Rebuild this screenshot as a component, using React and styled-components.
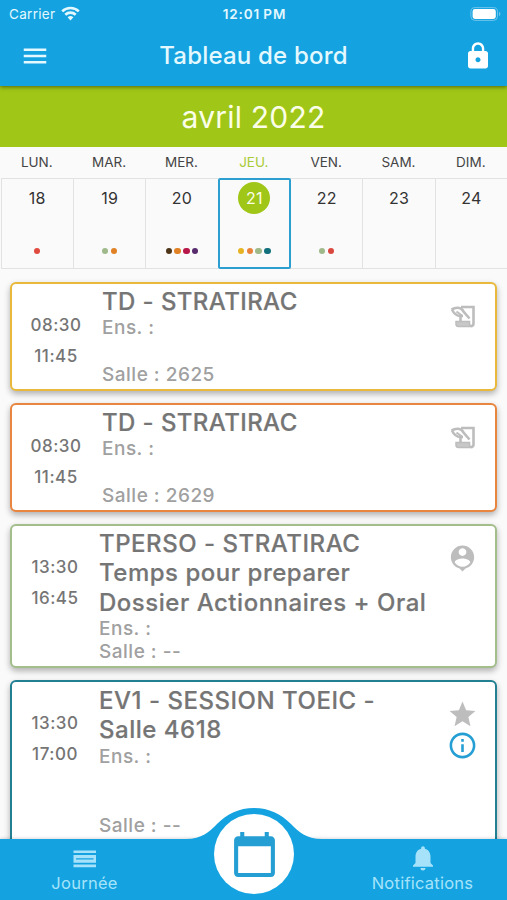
import React from 'react'
import styled, { createGlobalStyle } from 'styled-components'
import {
  MdMenu,
  MdLock,
  MdStar,
  MdInfoOutline,
  MdPersonPin,
  MdCalendarToday,
  MdNotifications,
} from 'react-icons/md'

const BLUE = '#14a3e0'
const GREEN = '#a0c617'

const GlobalStyle = createGlobalStyle`
  * {
    box-sizing: border-box;
  }
  body {
    margin: 0;
    background: #fafafa;
    font-family: Inter, "Liberation Sans", sans-serif;
  }
  svg {
    display: block;
  }
`

const Screen = styled.div`
  display: flex;
  flex-direction: column;
  width: 507px;
  height: 900px;
  overflow: hidden;
  background: #fafafa;
`

const Header = styled.header`
  flex: none;
  height: 86px;
  background: ${BLUE};
  color: #fff;
  box-shadow: 0 1px 4px rgba(0, 0, 0, 0.5);
  z-index: 1;
`

const StatusBar = styled.div`
  display: grid;
  grid-template-columns: 1fr auto 1fr;
  align-items: center;
  height: 27px;
  padding: 0 6px 0 9px;
  color: #e4f8ff;
  font-size: 13.5px;
`

const Carrier = styled.div`
  display: flex;
  align-items: center;
  gap: 6px;
  letter-spacing: 0.3px;
`

const Clock = styled.div`
  margin-left: -1px;
  font-weight: 600;
  letter-spacing: 0.85px;
  word-spacing: -1px;
`

const BatteryIcon = styled.svg`
  justify-self: end;
`

const AppBar = styled.div`
  display: grid;
  grid-template-columns: 30px 1fr 30px;
  align-items: center;
  height: 58px;
  padding: 0 14px 0 20px;
`

const Title = styled.h1`
  margin: -1px 6px 0 0;
  font-size: 24px;
  font-weight: 500;
  letter-spacing: 0.2px;
  text-align: center;
  color: #e4f8ff;
`

const Month = styled.div`
  flex: none;
  height: 61px;
  line-height: 62px;
  background: ${GREEN};
  color: #fbffe8;
  font-size: 30px;
  letter-spacing: 0.2px;
  text-align: center;
`

const Week = styled.div`
  flex: none;
  display: grid;
  grid-template-columns: repeat(7, 72.35px);
  padding-left: 0.6px;
`

const DayName = styled.div`
  height: 31px;
  line-height: 31px;
  font-size: 13.5px;
  text-align: center;
  color: ${(p) => (p.$selected ? '#a9cb36' : '#444')};
`

const Day = styled.div`
  display: flex;
  flex-direction: column;
  align-items: center;
  justify-content: space-between;
  height: 91px;
  padding: ${(p) => (p.$selected ? '2px 0 13px' : '3px 0 14px')};
  border: solid #e2e2e2;
  border-width: 1px 0 1px 1px;
  ${(p) => p.$selected && 'z-index: 1; margin-right: -1px; border: 2px solid #2c9fd0; border-radius: 2px;'}
`

const DayNumber = styled.div`
  width: 32px;
  height: 32px;
  line-height: 32px;
  border-radius: 50%;
  font-size: 16px;
  letter-spacing: 0.2px;
  text-align: center;
  color: ${(p) => (p.$selected ? '#fbffe8' : '#333')};
  background: ${(p) => (p.$selected ? GREEN : 'transparent')};
`

const Dots = styled.div`
  display: flex;
  gap: 2.4px;
`

const Dot = styled.span`
  width: 6.4px;
  height: 6.4px;
  border-radius: 50%;
  background: ${(p) => p.$color};
`

const Agenda = styled.main`
  flex: 1;
  min-height: 0;
  display: flex;
  flex-direction: column;
  gap: 12px;
  padding: 13px 10px 0;
  overflow: hidden;
`

const Card = styled.article`
  flex: none;
  display: grid;
  grid-template-columns: ${(p) => (p.$wide ? '90px' : '87px')} 1fr 65px;
  height: ${(p) => p.$height}px;
  border: 2px solid ${(p) => p.$color};
  border-radius: 6px;
  background: #fff;
  box-shadow: 0 3px 6px rgba(0, 0, 0, 0.3);
`

const Times = styled.div`
  padding: 26px ${(p) => (p.$wide ? '2px' : '1px')} 0 0;
  text-align: center;
  font-size: 17px;
  font-weight: 500;
  line-height: 30.6px;
  letter-spacing: 0.5px;
  color: #757575;
`

const Details = styled.div`
  padding-top: ${(p) => (p.$low ? '4px' : '3px')};
  white-space: pre-line;
`

const Course = styled.h2`
  margin: 0;
  font-size: 24px;
  font-weight: 500;
  line-height: 29.3px;
  letter-spacing: ${(p) => (p.$wide ? '0.4px' : '0.52px')};
  color: #757575;
  -webkit-text-stroke: 0.2px #757575;
`

const Info = styled.p`
  margin: 0;
  margin-top: ${(p) => p.$space || 0}px;
  font-size: 19px;
  font-weight: 500;
  line-height: 23.2px;
  letter-spacing: 0.5px;
  color: #a0a0a0;
`

const Marks = styled.div`
  display: flex;
  flex-direction: column;
  align-items: center;
  padding-top: 17px;
  color: #bdbdbd;
`

const BottomNav = styled.nav`
  position: relative;
  flex: none;
  display: flex;
  justify-content: space-between;
  height: 61px;
  background: ${BLUE};
  color: #a6e3fb;
  box-shadow: 0 -1px 3px rgba(0, 0, 0, 0.15);
`

const NavItem = styled.div`
  display: flex;
  flex-direction: column;
  align-items: center;
  width: 169px;
  padding-top: 4px;
  font-size: 16.5px;
  line-height: 20px;
  letter-spacing: 0.25px;
`

/* raised bulge that carries the round calendar button */
const Bulge = styled.svg`
  position: absolute;
  left: 180px;
  top: -37px;
`

const HomeButton = styled.div`
  position: absolute;
  left: 214px;
  top: -25px;
  display: flex;
  align-items: center;
  justify-content: center;
  width: 80px;
  height: 80px;
  border-radius: 50%;
  background: #fff;
  color: #259fd3;
`

const week = [
  { name: 'LUN.', day: 18, dots: ['#e04a3f'] },
  { name: 'MAR.', day: 19, dots: ['#9fb98a', '#e08125'] },
  { name: 'MER.', day: 20, dots: ['#4d3518', '#e08125', '#b8174a', '#562a6b'] },
  { name: 'JEU.', day: 21, dots: ['#e6b422', '#e8823a', '#9fb98a', '#12707c'], selected: true },
  { name: 'VEN.', day: 22, dots: ['#9fb98a', '#d9483f'] },
  { name: 'SAM.', day: 23, dots: [] },
  { name: 'DIM.', day: 24, dots: [] },
]

const Wifi = () => (
  <svg width="19" height="15" viewBox="0 0 19 15" fill="none" stroke="#e4f8ff" strokeWidth="2.6">
    <path d="M1.2 5.4a12 12 0 0 1 16.6 0" />
    <path d="M4.3 8.7a7.6 7.6 0 0 1 10.4 0" />
    <path d="M9.5 14.4 6.6 11.3a4.3 4.3 0 0 1 5.8 0z" fill="#e4f8ff" stroke="none" />
  </svg>
)

const Battery = () => (
  <BatteryIcon width="31" height="14" viewBox="0 0 31 14">
    <rect x="0.9" y="0.6" width="26.6" height="12.8" rx="4" fill="none" stroke="#6fc4ea" />
    <rect x="2.6" y="2" width="23.2" height="10" rx="2.4" fill="#fff" />
    <path d="M29 4.8c1.8.6 1.8 3.8 0 4.4z" fill="#6fc4ea" />
  </BatteryIcon>
)

// scroll with a quill
const Scroll = () => (
  <svg width="30" height="30" viewBox="0 0 30 30" fill="none" stroke="#bdbdbd" strokeWidth="2.6">
    <path d="M13 6H25.500V22.500q0 2.500-2.500 2.500" />
    <path d="M12.500 21.500V15" />
    <path d="M3.500 8.500C8 6 13 6 15.500 10.500L21.500 17.500M4 8.500Q7 15 12.500 15H15" />
    <path d="M8.500 10.500l6 4.500" strokeWidth="2" />
    <path d="M8 20.500H21.500V22q0 2 1.500 3.500H10.500Q8 25.500 8 23z" fill="#c8c8c8" strokeWidth="1.500" />
  </svg>
)

const DayView = () => (
  <svg width="30" height="30" viewBox="0 0 30 30" fill="currentColor">
    <path d="M3.500 7.500h22.500v2.600h-22.500zM3.500 21.600h22.500v2.600h-22.500z" />
    <path d="M3.500 12h22.500v7.700h-22.500zM6 15.200v1.400h17.500v-1.400z" fillRule="evenodd" />
  </svg>
)

const courses = [
  {
    start: '08:30', end: '11:45', title: 'TD - STRATIRAC', room: '2625',
    color: '#e9b93c', height: 109, space: 23, wide: true,
    icon: <Scroll />,
  },
  {
    start: '08:30', end: '11:45', title: 'TD - STRATIRAC', room: '2629',
    color: '#e8853f', height: 109, space: 23, wide: true,
    icon: <Scroll />,
  },
  {
    start: '13:30', end: '16:45', title: 'TPERSO - STRATIRAC\nTemps pour preparer\nDossier Actionnaires + Oral', room: '--',
    color: '#a3bd8b', height: 144, space: 0,
    icon: <MdPersonPin size={31} />,
  },
  {
    start: '13:30', end: '17:00', title: 'EV1 - SESSION TOEIC -\nSalle 4618', room: '--',
    color: '#237f92', height: 168, space: 46, info: true,
    icon: <MdStar size={31} />,
  },
]

const App = () => {
  return (
    <Screen>
      <GlobalStyle />
      <Header>
        <StatusBar>
          <Carrier>Carrier <Wifi /></Carrier>
          <Clock>12:01 PM</Clock>
          <Battery />
        </StatusBar>
        <AppBar>
          <MdMenu size={30} color="#e4f8ff" />
          <Title>Tableau de bord</Title>
          <MdLock size={30} />
        </AppBar>
      </Header>

      <Month>avril 2022</Month>
      <Week>
        {week.map((d) => <DayName key={d.name} $selected={d.selected}>{d.name}</DayName>)}
        {week.map((d) => (
          <Day key={d.day} $selected={d.selected}>
            <DayNumber $selected={d.selected}>{d.day}</DayNumber>
            <Dots>
              {d.dots.map((color) => <Dot key={color} $color={color} />)}
            </Dots>
          </Day>
        ))}
      </Week>

      <Agenda>
        {courses.map((c) => (
          <Card key={c.color} $color={c.color} $height={c.height} $wide={c.wide}>
            <Times $wide={c.wide}>
              <div>{c.start}</div>
              <div>{c.end}</div>
            </Times>
            <Details $low={c.info}>
              <Course $wide={c.wide}>{c.title}</Course>
              <Info>Ens. :</Info>
              <Info $space={c.space}>Salle : {c.room}</Info>
            </Details>
            <Marks>
              {c.icon}
              {c.info && <MdInfoOutline size={31} color="#259fd3" />}
            </Marks>
          </Card>
        ))}
      </Agenda>

      <BottomNav>
        <NavItem>
          <DayView />
          Journée
        </NavItem>
        <NavItem>
          <MdNotifications size={30} />
          Notifications
        </NavItem>
        <Bulge width="148" height="44" viewBox="0 0 148 44">
          <path d="M6 37C22 37 29 30 37 22C47 12 59 6 74 6S101 12 111 22C119 30 126 37 142 37V44H6z" fill={BLUE} />
        </Bulge>
        <HomeButton>
          <MdCalendarToday size={49} />
        </HomeButton>
      </BottomNav>
    </Screen>
  )
}

export default App
